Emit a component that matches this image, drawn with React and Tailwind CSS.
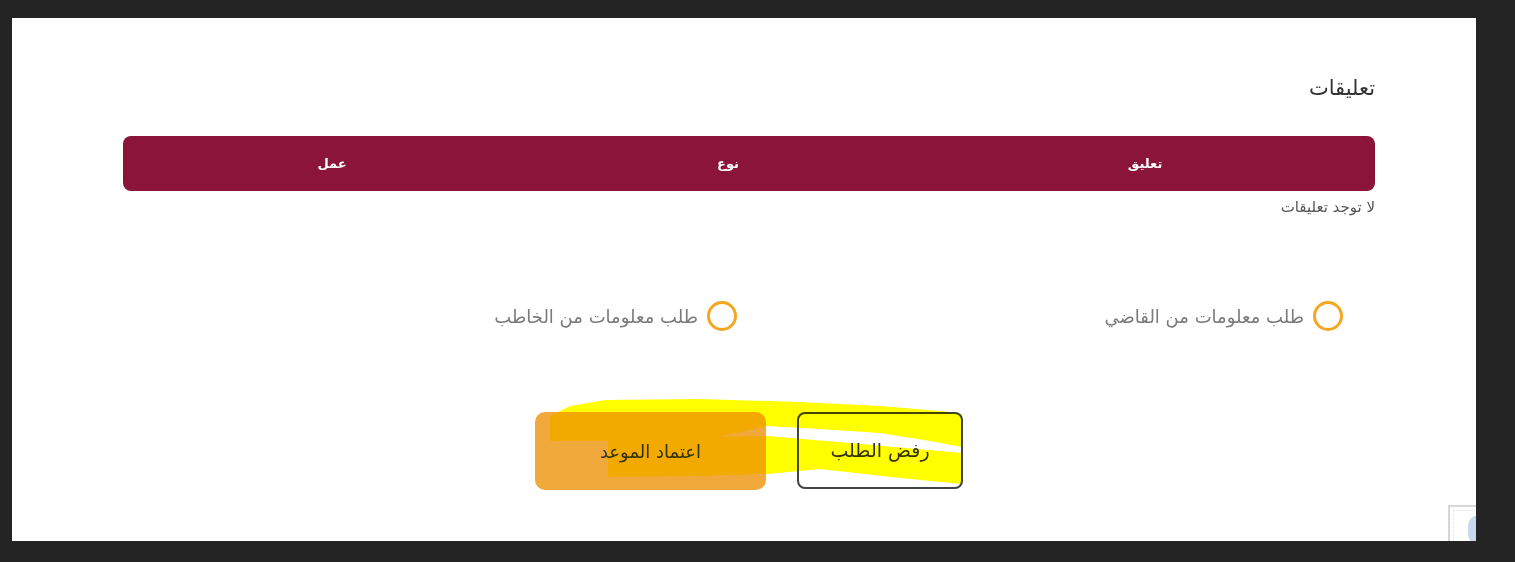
import React from "react";

const font = { fontFamily: '"DejaVu Sans", "Noto Sans", sans-serif' };

function Radio({ label }) {
  return (
    <label className="flex items-center gap-[9px] cursor-pointer">
      <span className="w-[30px] h-[30px] rounded-full border-[3px] border-[#f5a623] bg-white shrink-0"></span>
      <span className="text-[18px] text-[#7a7a7a]">{label}</span>
    </label>
  );
}

export default function App() {
  return (
    <div className="w-[1515px] h-[562px] bg-[#242424] pt-[18px] pl-[12px] overflow-hidden" style={font}>
      <div dir="rtl" className="relative w-[1464px] h-[523px] bg-white pr-[101px] pl-[111px] pt-[58px]">
        {/* section title */}
        <h2 className="text-[21px] text-[#333] leading-[24px]">تعليقات</h2>

        {/* comments table head */}
        <div className="mt-[36px] h-[55px] rounded-[8px] bg-[#8a1538] grid grid-cols-[460px_374px_418px] items-center text-center text-white text-[13px] font-bold">
          <div>تعليق</div>
          <div>نوع</div>
          <div>عمل</div>
        </div>
        <p className="mt-[7px] text-[15px] text-[#555] leading-[18px]">لا توجد تعليقات</p>

        {/* request info options */}
        <div className="mt-[85px] grid grid-cols-2">
          <div className="pr-[32px]">
            <Radio label="طلب معلومات من القاضي" />
          </div>
          <div className="pr-[12px]">
            <Radio label="طلب معلومات من الخاطب" />
          </div>
        </div>

        {/* actions */}
        <div className="mt-[81px] flex justify-center gap-[31px]">
          <button className="w-[166px] h-[77px] rounded-[8px] border-2 border-[#444] bg-white text-[19px] text-[#333]">
            رفض الطلب
          </button>
          <button className="w-[231px] h-[78px] rounded-[10px] bg-[#f2a93b] text-[18px] text-[#333]">
            اعتماد الموعد
          </button>
        </div>

        {/* highlighter marks over the buttons */}
        <svg
          className="absolute left-0 top-0 pointer-events-none mix-blend-multiply"
          width="1464"
          height="523"
          viewBox="12 18 1464 523"
        >
          <polygon
            fill="#ffff00"
            points="550,441 550,416 570,406 605,400 700,399 800,402 880,406 940,411 962,414 962,447 930,441 880,433 820,429 767,426 700,441 608,441"
          />
          <polygon
            fill="#ffff00"
            points="608,440 700,437 767,436 850,443 962,453 962,484 900,478 820,469 767,474 700,476 608,477"
          />
        </svg>

        {/* cut-off corner badge */}
        <div className="absolute right-0 bottom-0 w-[28px] h-[36px] border-[2px] border-r-0 border-b-0 border-[#d6d6d6] bg-white overflow-hidden">
          <div className="absolute left-[3px] top-[3px] w-[24px] h-[32px] border border-dotted border-[#e2e2e2]"></div>
          <div className="absolute left-[18px] top-[8px] w-[22px] h-[30px] rounded-full bg-[#c9d9ee]"></div>
        </div>
      </div>
    </div>
  );
}
